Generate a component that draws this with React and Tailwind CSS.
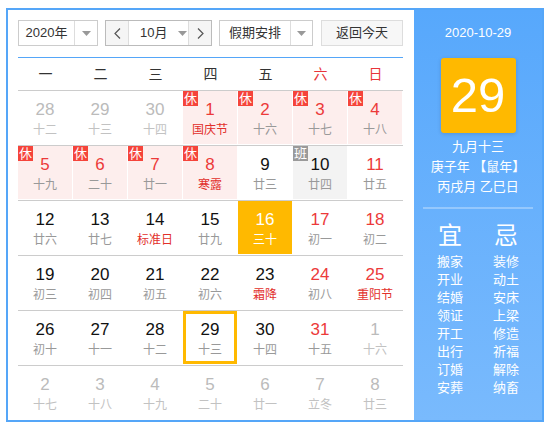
import React from 'react';

const FONT = { fontFamily: '"Liberation Sans", "Noto Sans CJK SC", sans-serif' };

// [day, lunar, kind] kind: o=other month, h=holiday(休), w=work(班), f=festival red, e=weekend
const weeks = [
  [[28, '十二', 'o'], [29, '十三', 'o'], [30, '十四', 'o'], [1, '国庆节', 'hf'], [2, '十六', 'h'], [3, '十七', 'h'], [4, '十八', 'h']],
  [[5, '十九', 'h'], [6, '二十', 'h'], [7, '廿一', 'h'], [8, '寒露', 'hf'], [9, '廿三', ''], [10, '廿四', 'w'], [11, '廿五', 'e']],
  [[12, '廿六', ''], [13, '廿七', ''], [14, '标准日', 'f'], [15, '廿九', ''], [16, '三十', 's'], [17, '初一', 'e'], [18, '初二', 'e']],
  [[19, '初三', ''], [20, '初四', ''], [21, '初五', ''], [22, '初六', ''], [23, '霜降', 'f'], [24, '初八', 'e'], [25, '重阳节', 'ef']],
  [[26, '初十', ''], [27, '十一', ''], [28, '十二', ''], [29, '十三', 't'], [30, '十四', ''], [31, '十五', 'e'], [1, '十六', 'o']],
  [[2, '十七', 'o'], [3, '十八', 'o'], [4, '十九', 'o'], [5, '二十', 'o'], [6, '廿一', 'o'], [7, '立冬', 'o'], [8, '廿三', 'o']],
];

const yi = ['搬家', '开业', '结婚', '领证', '开工', '出行', '订婚', '安葬'];
const ji = ['装修', '动土', '安床', '上梁', '修造', '祈福', '解除', '纳畜'];

const Caret = () => (
  <svg width="9" height="5" viewBox="0 0 9 5"><path d="M0 0h9L4.5 5z" fill="#999" /></svg>
);

const Chevron = ({ dir }) => (
  <svg width="7" height="11" viewBox="0 0 7 11" fill="none" stroke="#555" strokeWidth="1.2">
    {dir === 'l' ? <path d="M6 0.5L1 5.5l5 5" /> : <path d="M1 0.5l5 5-5 5" />}
  </svg>
);

function Cell({ d }) {
  const [day, lunar, kind] = d;
  const other = kind.includes('o');
  const hol = kind.includes('h');
  const work = kind.includes('w');
  const sel = kind.includes('s');
  const today = kind.includes('t');
  let bg = '';
  if (hol) bg = 'bg-[#fdeeed]';
  if (work) bg = 'bg-[#f3f3f3]';
  if (sel) bg = 'bg-[#ffb900]';
  let numColor = 'text-[#111]';
  if (hol || kind.includes('e')) numColor = 'text-[#ec3a3a]';
  if (other) numColor = 'text-[#bbb]';
  if (sel) numColor = 'text-white';
  let lunColor = 'text-[#999]';
  if (kind.includes('f')) lunColor = 'text-[#e2302c]';
  if (other) lunColor = 'text-[#c2c2c2]';
  if (sel) lunColor = 'text-white';
  return (
    <div className="w-[55px] h-[54px] pr-[1px] pb-[1px]">
      <div className={`relative w-[54px] h-[53px] flex flex-col items-center ${bg} ${today ? 'border-[3px] border-[#ffb900] pt-[6px]' : 'pt-[9px]'}`}>
        {(hol || work) && (
          <span className={`absolute left-0 top-0 w-[15px] h-[15px] flex items-center justify-center text-[13px] leading-none text-white ${hol ? 'bg-[#f5443b]' : 'bg-[#9a9a9a]'}`}>
            {hol ? '休' : '班'}
          </span>
        )}
        <span className={`text-[17px] leading-[20px] ${numColor}`}>{day}</span>
        <span className={`text-[12px] leading-[16px] mt-[2px] whitespace-nowrap ${lunColor}`}>{lunar}</span>
      </div>
    </div>
  );
}

export default function App() {
  return (
    <div className="w-[551px] h-[431px] bg-white pt-[8px] pl-[6px]" style={FONT}>
      <div className="w-[538px] h-[414px] border-2 border-[#55a6f8] flex">
        {/* calendar side */}
        <div className="w-[406px] pl-[10px] pr-[11px] pt-[10px]">
          <div className="flex items-center h-[26px] text-[13px] text-[#333] whitespace-nowrap">
            <div className="w-[80px] h-[26px] border border-[#ccc] flex">
              <div className="w-[55px] flex items-center justify-center">2020年</div>
              <div className="flex-1 border-l border-[#ddd] flex items-center justify-center"><Caret /></div>
            </div>
            <div className="ml-[7px] w-[107px] h-[26px] border border-[#bbb] flex">
              <div className="w-[22px] shrink-0 bg-[#f5f5f5] flex items-center justify-center"><Chevron dir="l" /></div>
              <div className="w-[61px] shrink-0 border-l border-r border-[#ddd] flex items-center">
                <span className="ml-[11px]">10月</span>
                <span className="ml-[11px] flex"><Caret /></span>
              </div>
              <div className="flex-1 bg-[#f5f5f5] flex items-center justify-center"><Chevron dir="r" /></div>
            </div>
            <div className="ml-[7px] w-[94px] h-[26px] border border-[#ccc] flex">
              <div className="w-[70px] flex items-center justify-center">假期安排</div>
              <div className="flex-1 border-l border-[#ddd] flex items-center justify-center"><Caret /></div>
            </div>
            <div className="ml-[8px] w-[82px] h-[26px] border border-[#ddd] bg-[#f7f7f7] flex items-center justify-center">返回今天</div>
          </div>
          <div className="mt-[11px] h-[1px] bg-[#55a6f8]" />
          <div className="grid grid-cols-7 h-[32px] items-center text-[14px] text-[#333] text-center">
            {['一', '二', '三', '四', '五', '六', '日'].map((w, i) => (
              <div key={w} className={i > 4 ? 'text-[#e8353a]' : ''}>{w}</div>
            ))}
          </div>
          {weeks.map((row, r) => (
            <div key={r} className="flex border-t border-[#ccc]">
              {row.map((d, i) => <Cell key={i} d={d} />)}
            </div>
          ))}
        </div>
        {/* info side */}
        <div className="flex-1 bg-gradient-to-b from-[#57a8fc] to-[#79bafd] flex flex-col items-center text-white">
          <div className="mt-[13px] text-[13px] leading-[20px]">2020-10-29</div>
          <div className="mt-[15px] w-[75px] h-[75px] rounded-[3px] bg-[#ffb900] shadow-[0_1px_4px_rgba(0,0,0,0.15)] flex items-center justify-center text-[49px] leading-none">29</div>
          <div className="mt-[4px] text-[13px] leading-[20px] text-center whitespace-nowrap">
            <div>九月十三</div>
            <div>庚子年 【鼠年】</div>
            <div>丙戌月 乙巳日</div>
          </div>
          <div className="mt-[10px] w-[110px] h-[2px] bg-white/30" />
          <div className="mt-[13px] flex gap-[30px]">
            <div className="flex flex-col items-center w-[26px]">
              <div className="text-[24px] leading-[28px]">宜</div>
              <div className="mt-[3px] text-[13px] leading-[18px] flex flex-col items-center whitespace-nowrap">
                {yi.map(t => <div key={t}>{t}</div>)}
              </div>
            </div>
            <div className="flex flex-col items-center w-[26px]">
              <div className="text-[24px] leading-[28px]">忌</div>
              <div className="mt-[3px] text-[13px] leading-[18px] flex flex-col items-center whitespace-nowrap">
                {ji.map(t => <div key={t}>{t}</div>)}
              </div>
            </div>
          </div>
        </div>
      </div>
    </div>
  );
}
